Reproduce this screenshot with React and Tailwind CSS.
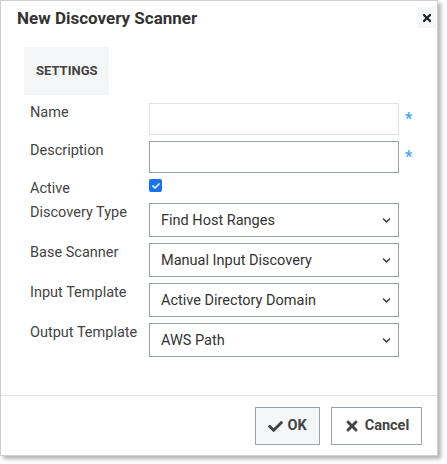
import React from 'react';
import { FaCheck, FaTimes, FaChevronDown } from 'react-icons/fa';

const SELECTS = [
  { label: 'Discovery Type', value: 'Find Host Ranges' },
  { label: 'Base Scanner', value: 'Manual Input Discovery' },
  { label: 'Input Template', value: 'Active Directory Domain' },
  { label: 'Output Template', value: 'AWS Path' },
];

function Required() {
  return <span className="ml-[6px] mt-[6px] text-[16px] font-bold leading-5 text-[#3ea6f5]">*</span>;
}

function SelectBox({ value }) {
  return (
    <div className="flex h-[34px] w-[250px] items-center justify-between border border-[#9aa3ab] bg-white pl-[11px] pr-[7px] text-[14.5px] text-[#333]">
      <span className="pt-[1px]">{value}</span>
      <FaChevronDown size={9} className="text-[#333]" />
    </div>
  );
}

export default function App() {
  return (
    <div className="h-[464px] w-[447px] bg-white" style={{ fontFamily: 'Roboto, "Liberation Sans", sans-serif' }}>
      <div className="flex h-[456px] w-[438px] flex-col border border-[#cfcfcf] bg-white shadow-[3px_3px_4px_rgba(0,0,0,0.3)]">
        <div className="flex items-center justify-between pl-[16px] pr-[1px] pt-[6px]">
          <h1 className="text-[17px] font-bold leading-5 text-[#333]">New Discovery Scanner</h1>
          <button className="flex h-[21px] w-[19px] items-center justify-center bg-[#f5f6f8] text-[#222]">
            <FaTimes size={12} />
          </button>
        </div>

        <div className="ml-[23px] mt-[19px] flex h-[48px] w-[85px] items-center bg-[#f5f6f8] pl-[12px] text-[13px] font-bold text-[#444]">
          SETTINGS
        </div>

        <div className="mt-[8px] flex flex-col gap-[6px] pl-[29px] text-[14.5px] text-[#444]">
          <div className="flex items-start">
            <span className="w-[119px] leading-5">Name</span>
            <div className="h-[32px] w-[250px] border border-[#e2e2e2] bg-white" />
            <Required />
          </div>
          <div className="flex items-start">
            <span className="w-[119px] leading-5">Description</span>
            <div className="h-[32px] w-[250px] border border-[#9aa3ab] bg-white" />
            <Required />
          </div>
          <div className="flex h-[18px] items-start">
            <span className="w-[119px] leading-5">Active</span>
            <div className="flex h-[13px] w-[13px] items-center justify-center rounded-[2px] bg-[#1a73e8]">
              <FaCheck size={8} className="text-white" />
            </div>
          </div>
          {SELECTS.map((s) => (
            <div key={s.label} className="flex items-start">
              <span className="w-[119px] leading-5">{s.label}</span>
              <SelectBox value={s.value} />
            </div>
          ))}
        </div>

        <div className="mt-auto border-t border-[#e3e3e3]">
          <div className="flex justify-end gap-[11px] pb-[10px] pr-[15px] pt-[11px]">
            <button className="flex h-[38px] w-[65px] items-center justify-center gap-[4px] border border-[#9aa3ab] bg-[#f5f6f8] text-[14.5px] font-bold text-[#444]">
              <FaCheck size={15} />
              OK
            </button>
            <button className="flex h-[38px] w-[91px] items-center justify-center gap-[5px] border border-[#9aa3ab] bg-white text-[14.5px] font-bold text-[#444]">
              <FaTimes size={16} />
              Cancel
            </button>
          </div>
        </div>
      </div>
    </div>
  );
}
